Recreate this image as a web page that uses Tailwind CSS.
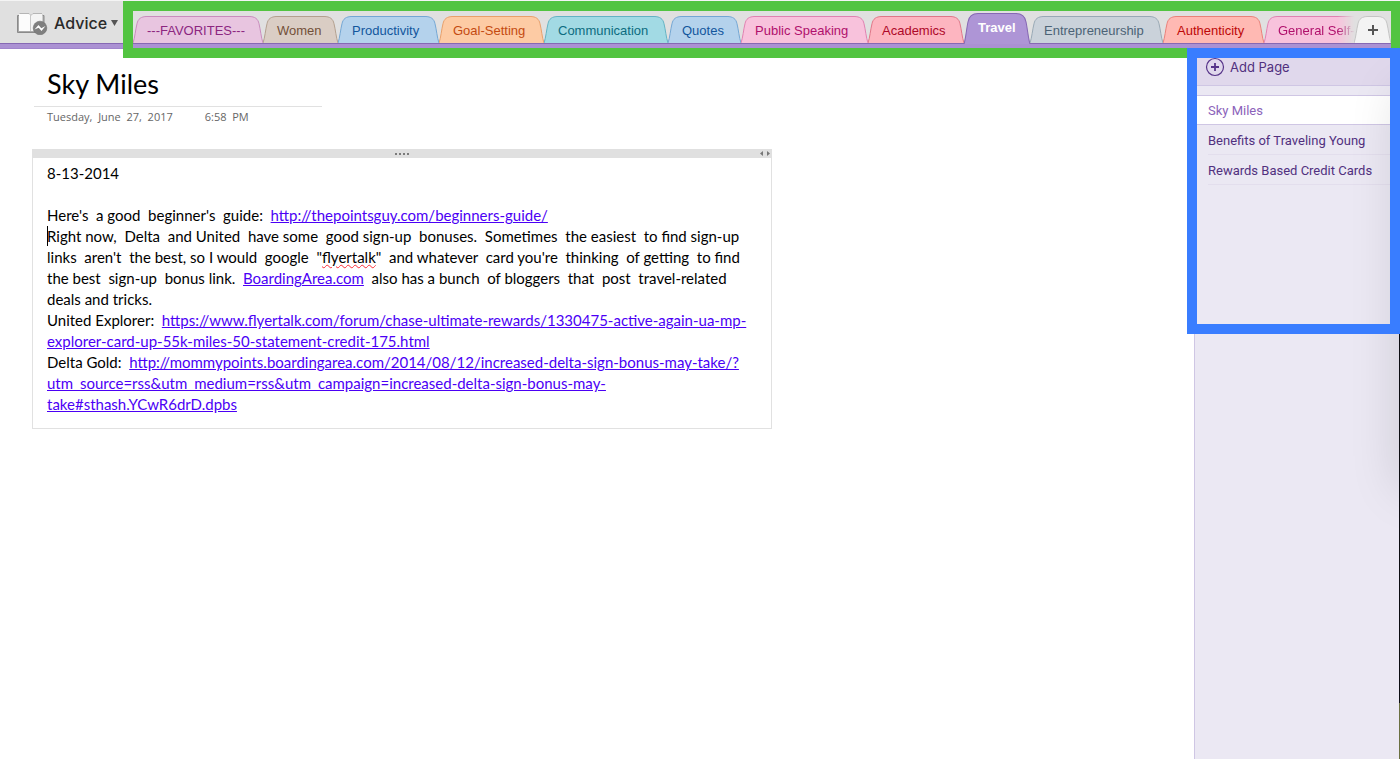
<!DOCTYPE html>
<html lang="en">
<head>
<meta charset="utf-8">
<meta name="viewport" content="width=device-width, initial-scale=1">
<title>Advice - Sky Miles</title>
<script src="https://cdn.jsdelivr.net/npm/@tailwindcss/browser@4"></script>
</head>
<body class="flex min-h-screen flex-col overflow-x-hidden bg-white font-['Liberation_Sans',sans-serif]">
<svg class="hidden" aria-hidden="true">
  <symbol id="cap-l" viewBox="0 0 14 28" preserveAspectRatio="none">
    <path d="M0 28C2 22 2.500 14 4 8C5 3 8 .5 14 .5V28Z" fill="currentColor"/>
    <path d="M0 28C2 22 2.500 14 4 8C5 3 8 .5 14 .5" fill="none" stroke="var(--edge)"/>
  </symbol>
  <symbol id="cap-r" viewBox="0 0 14 28" preserveAspectRatio="none">
    <path d="M14 28C12 22 11.500 14 10 8C9 3 6 .5 0 .5V28Z" fill="currentColor"/>
    <path d="M14 28C12 22 11.500 14 10 8C9 3 6 .5 0 .5" fill="none" stroke="var(--edge)"/>
  </symbol>
</svg>

<header class="relative flex h-[49px] border-t border-[#f4f4f4] bg-[#e0e0e0]">
  <button class="flex h-[44px] w-[133px] shrink-0 items-center pl-4 text-left">
    <svg class="h-6 w-8" viewBox="0 0 32 24" fill="none">
      <path d="M1.500 4.500H3.500V3H13L15 4.500L17 3H26V4.500H28V21.500H1.500Z" fill="#a9a9a9" stroke="#8a8a8a"/>
      <path d="M3 3H12.500Q15 3 15 5V20H3Z" fill="#fcfcfc"/>
      <path d="M15 5Q15 3 17.500 3H26.500V20H15Z" fill="#f4f4f4"/>
      <path d="M14.500 4V20" stroke="#c8c8c8"/>
      <circle cx="24" cy="17" r="6.800" fill="#7f7f7f" stroke="#6f6f6f" stroke-width=".6"/>
      <path d="M18.500 18.500L22.500 14L25.300 17.200L29.500 15L25.500 20L22.700 16.800Z" fill="#fff"/>
    </svg>
    <span class="ml-1.5 font-['Inter',sans-serif] text-base font-medium text-[#2a2a2a]">Advice</span>
    <svg class="ml-1 h-1.5 w-[7px]" viewBox="0 0 7 6"><path d="M0 0H7L3.500 6Z" fill="#555"/></svg>
  </button>
  <div class="pointer-events-none absolute inset-x-0 bottom-0 h-[6px] border-y border-t-[#8668b4] border-b-[#a184cc] bg-[#ab91d3]"></div>
  <nav aria-label="Sections" class="relative flex h-[43px] min-w-0 flex-1 items-end overflow-hidden text-[13px] leading-7" id="tabs"></nav>
  <button aria-label="Add section" class="absolute right-[9px] top-[15px] flex h-[27px] w-[37px] text-[#f3f3f3] [--edge:#c4c4c4]">
    <svg class="h-[27px] w-3.5"><use href="#cap-l"/></svg>
    <span class="flex-1 self-stretch border-t border-[#c4c4c4] bg-[#f3f3f3]"></span>
    <svg class="h-[27px] w-3.5"><use href="#cap-r"/></svg>
    <svg class="absolute left-[13px] top-2 size-3" viewBox="0 0 12 12"><path d="M6 1V11M1 6H11" stroke="#555" stroke-width="2"/></svg>
  </button>
  <div class="pointer-events-none absolute left-[123px] right-0 top-0 z-10 h-[57px] border-10 border-r-9 border-[#52c441]"></div>
</header>

<div class="flex flex-1">
  <main class="min-w-0 flex-1 pl-8 pt-[18px] font-['Lato',sans-serif]">
    <h1 class="ml-0.5 w-72 border-b border-[#e1e1e1] pb-1.5 pl-[13px] text-[27px] leading-[33px] text-black">Sky Miles</h1>
    <p class="flex gap-8 whitespace-pre pl-[15px] pt-0.5 font-['Open_Sans',sans-serif] text-[11px] leading-4 text-[#666]"><span>Tuesday,  June  27,  2017</span><span>6:58  PM</span></p>
    <section class="mt-6 w-[740px] border border-[#e1e1e1] pb-[13px]">
      <div class="relative -mx-px -mt-px flex h-[9px] items-center justify-center bg-[#e0e0e0]">
        <svg class="h-0.5 w-3.5" viewBox="0 0 14 2"><path d="M0 0h2v2H0zM4 0h2v2H4zM8 0h2v2H8zM12 0h2v2h-2z" fill="#7b7b7b"/></svg>
        <svg class="absolute right-0.5 h-[5px] w-2.5" viewBox="0 0 10 5"><path d="M3 0V5L0 2.500ZM7 0V5L10 2.500Z" fill="#777"/></svg>
      </div>
      <div class="whitespace-pre pl-[14px] pt-[5px] text-[15px] leading-[21px] text-black [&_a]:text-[#4b00f5] [&_a]:underline"><p>8-13-2014</p><p>&nbsp;</p><p>Here's  a good  beginner's  guide:  <a href="#">http://thepointsguy.com/beginners-guide/</a></p><p class="relative"><span class="absolute left-0 top-0 h-5 w-px bg-black"></span>Right now,  Delta  and United  have some  good sign-up  bonuses.  Sometimes  the easiest  to find sign-up
links  aren't  the best, so I would  google  "<span class="underline decoration-red-500 decoration-wavy decoration-1">flyertalk</span>"  and whatever  card you're  thinking  of getting  to find
the best  sign-up  bonus link.  <a href="#">BoardingArea.com</a>  also has a bunch  of bloggers  that  post  travel-related
deals and tricks.</p><p>United Explorer:  <a href="#">https://www.flyertalk.com/forum/chase-ultimate-rewards/1330475-active-again-ua-mp-
explorer-card-up-55k-miles-50-statement-credit-175.html</a></p><p>Delta Gold:  <a href="#">http://mommypoints.boardingarea.com/2014/08/12/increased-delta-sign-bonus-may-take/?
utm_source=rss&amp;utm_medium=rss&amp;utm_campaign=increased-delta-sign-bonus-may-
take#sthash.YCwR6drD.dpbs</a></p></div>
    </section>
  </main>

  <aside class="relative w-[206px] shrink-0 overflow-hidden border-l border-[#cfc6e4] bg-[#ebe8f3] font-['Roboto',sans-serif] text-[13px] text-[#51307f]">
    <button class="flex h-[37px] w-full items-center gap-[5px] border-b border-[#cfc6e4] bg-[#e0d8ec] pl-2.5 text-left">
      <svg class="size-5" viewBox="0 0 20 20" fill="none" stroke="#563489"><circle cx="10" cy="10" r="8.500" stroke-width="1.200"/><path d="M10 6V14M6 10H14" stroke-width="1.800"/></svg>
      <span class="pt-0.5 font-['Inter',sans-serif]">Add Page</span>
    </button>
    <ul class="mt-[9px] leading-[31px]">
      <li class="h-[30px] border-y border-[#cfc6e4] bg-white pl-[13px] leading-[30px]"><a href="#" aria-current="page" class="text-[#8b62ba]">Sky Miles</a></li>
      <li class="ml-[13px] h-[30px] border-b border-[#e3deed]"><a href="#">Benefits of Traveling Young</a></li>
      <li class="ml-[13px] h-[30px] border-b border-[#e3deed]"><a href="#">Rewards Based Credit Cards</a></li>
    </ul>
    <div class="pointer-events-none absolute top-10 left-full h-[400px] w-10 shadow-[0_0_50px_rgba(0,0,0,0.15)]"></div>
    <div class="pointer-events-none absolute bottom-0 right-0 top-[285px] flex w-px flex-col bg-[#0c0d12]"><span class="mt-auto h-14 bg-[#6b7042]"></span></div>
  </aside>
</div>
<div class="pointer-events-none absolute right-0 top-12 z-10 h-[286px] w-[213px] border-10 border-[#397dff]"></div>

<script>
const sections = [
  ["---FAVORITES---", 130, "text-[#e8c5e0] [--edge:#c98bbd]", "bg-[#e8c5e0]", "text-[#8c2680]"],
  ["Women", 75, "text-[#dacdc4] [--edge:#b39f8e]", "bg-[#dacdc4]", "text-[#735038]"],
  ["Productivity", 101, "text-[#b4d2ec] [--edge:#72a6d4]", "bg-[#b4d2ec]", "text-[#12569c]"],
  ["Goal-Setting", 105, "text-[#fdcba4] [--edge:#e99f69]", "bg-[#fdcba4]", "text-[#c44a10]"],
  ["Communication", 124, "text-[#a2dae4] [--edge:#62b3c3]", "bg-[#a2dae4]", "text-[#0c6c80]"],
  ["Quotes", 73, "text-[#b4d2ec] [--edge:#72a6d4]", "bg-[#b4d2ec]", "text-[#12569c]"],
  ["Public Speaking", 127, "text-[#f8c2dc] [--edge:#e080b0]", "bg-[#f8c2dc]", "text-[#b0106c]"],
  ["Academics", 96, "text-[#fdb5c0] [--edge:#e07587]", "bg-[#fdb5c0]", "text-[#ae0828]"],
  ["Travel", 66, "text-[#ae95d6] [--edge:#8668b4]", "bg-[#ae95d6]", "text-white"],
  ["Entrepreneurship", 133, "text-[#cad2da] [--edge:#98a8b5]", "bg-[#cad2da]", "text-[#4c6376]"],
  ["Authenticity", 101, "text-[#ffb9b3] [--edge:#ea8078]", "bg-[#ffb9b3]", "text-[#bd0808]"],
  ["General Self-", 108, "text-[#f8c2dc] [--edge:#e080b0]", "bg-[#f8c2dc]", "text-[#b0106c]"]
];
const nav = document.getElementById("tabs");
for (const [name, width, cap, fill, ink] of sections) {
  const active = name === "Travel", last = name === "General Self-";
  const tall = active ? "h-[31px]" : "h-[27px]";
  const b = document.createElement("button");
  b.className = "relative flex shrink-0 " + tall + " " + cap + (active ? " font-bold" : " mb-px") +
    (last ? " [mask-image:linear-gradient(to_right,black_68%,transparent_84%)]" : "");
  b.style.width = width + "px";
  b.innerHTML = `<svg class="w-3.5 shrink-0 ${tall}"><use href="#cap-l"/></svg>
    <span class="min-w-0 flex-1 whitespace-nowrap border-t border-(--edge) text-left ${fill} ${ink}">${name}</span>
    <svg class="w-3.5 shrink-0 ${tall}"><use href="#cap-r"/></svg>`;
  nav.append(b);
}
</script>
</body>
</html>
